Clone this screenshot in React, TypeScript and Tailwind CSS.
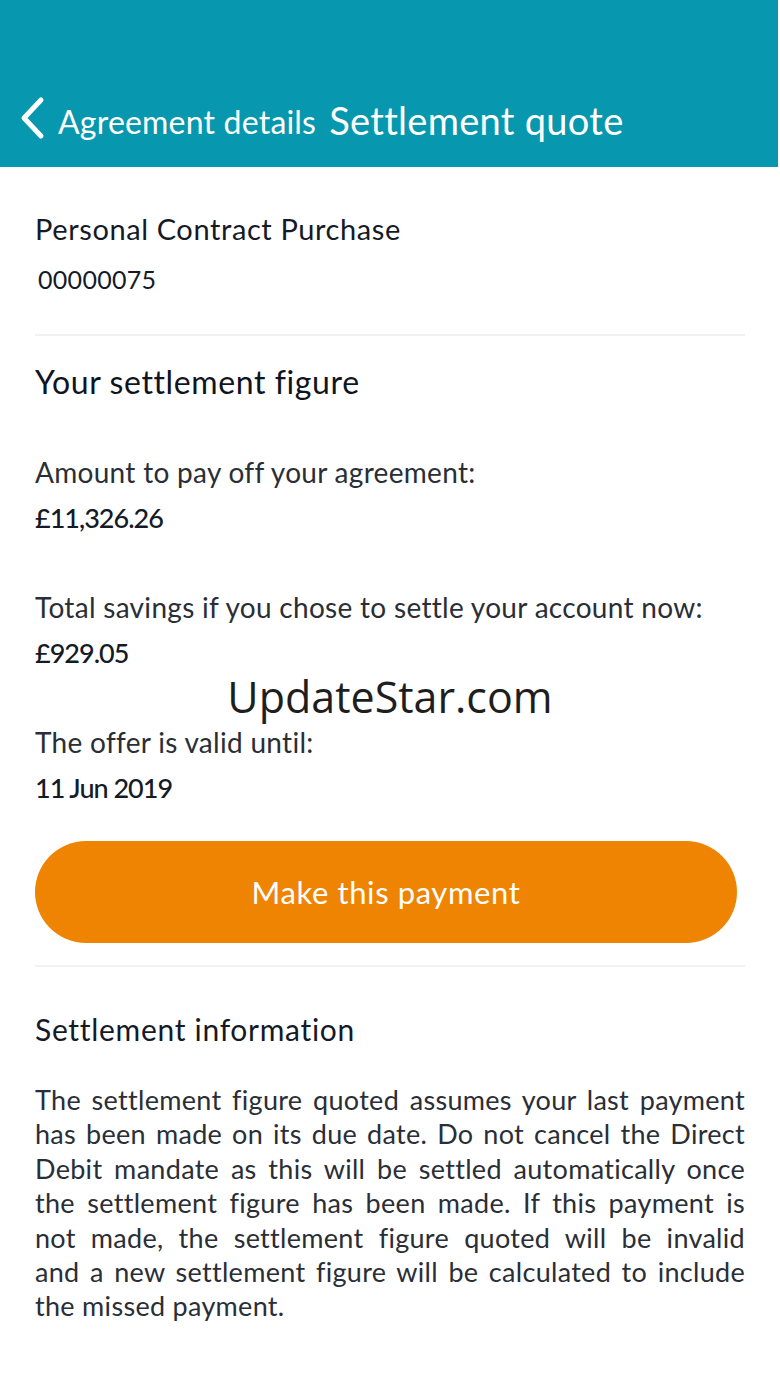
import React from "react";

const Divider = () => <div className="mx-[35px] h-[2px] bg-[#f1f1f1]" />;

const Field = ({ label, value }: { label: string; value: string }) => (
  <div className="flex flex-col">
    <p className="text-[28px] leading-[46px] tracking-[0.3px] text-[#2a2e36]">{label}</p>
    <p className="text-[27px] leading-[46px] font-medium tracking-[-1px] text-[#141a26]">{value}</p>
  </div>
);

const lines = [
  "The settlement figure quoted assumes your last payment",
  "has been made on its due date. Do not cancel the Direct",
  "Debit mandate as this will be settled automatically once",
  "the settlement figure has been made. If this payment is",
  "not made, the settlement figure quoted will be invalid",
  "and a new settlement figure will be calculated to include",
];

export default function App() {
  return (
    <div className="relative w-[780px] h-[1386px] bg-white font-['Lato',sans-serif] overflow-hidden">
      <header className="h-[167px] w-[778px] bg-[#0797ae] flex items-end pb-[25px] pl-[18px] text-white">
        <svg width="28" height="44" viewBox="0 0 28 44" className="mb-[2px]">
          <path d="M23 4 L6 22 L23 40" fill="none" stroke="white" strokeWidth="5" strokeLinecap="round" strokeLinejoin="round" />
        </svg>
        <span className="ml-[12px] text-[32px] leading-[40px] tracking-[0.2px]">Agreement details</span>
        <span className="ml-[13px] text-[38px] leading-[44px] tracking-[0.3px]">Settlement quote</span>
      </header>

      <section className="px-[35px] pt-[44px] pb-[38px]">
        <h2 className="text-[29px] leading-[36px] tracking-[0.6px] text-[#141a26]">Personal Contract Purchase</h2>
        <p className="mt-[15px] ml-[3px] text-[25px] leading-[34px] tracking-[0.3px] text-[#141a26]">00000075</p>
      </section>

      <Divider />

      <section className="px-[35px] pt-[26px]">
        <h2 className="text-[32px] leading-[40px] tracking-[0.6px] text-[#0f1420]">Your settlement figure</h2>
        <div className="mt-[47px] flex flex-col gap-[43px]">
          <Field label="Amount to pay off your agreement:" value="£11,326.26" />
          <Field label="Total savings if you chose to settle your account now:" value="£929.05" />
          <Field label="The offer is valid until:" value="11 Jun 2019" />
        </div>
        <button className="mt-[30px] w-[702px] h-[102px] rounded-full bg-[#ef8403] text-white text-[31px] tracking-[0.6px]">
          Make this payment
        </button>
      </section>

      <div className="mt-[22px]">
        <Divider />
      </div>

      <section className="px-[35px] pt-[44px]">
        <h2 className="text-[30px] leading-[36px] tracking-[0.7px] text-[#141a26]">Settlement information</h2>
        <div className="mt-[36px] text-[27px] leading-[34.4px] tracking-[0.3px] text-[#2a2e36]">
          {lines.map((l) => (
            <p key={l} className="text-justify [text-align-last:justify]">
              {l}
            </p>
          ))}
          <p>the missed payment.</p>
        </div>
      </section>

      <div className="absolute left-0 right-0 top-[672px] text-center font-['Open_Sans',sans-serif] text-[43px] leading-[50px] text-[#1e1e1e]">
        UpdateStar.com
      </div>
    </div>
  );
}
